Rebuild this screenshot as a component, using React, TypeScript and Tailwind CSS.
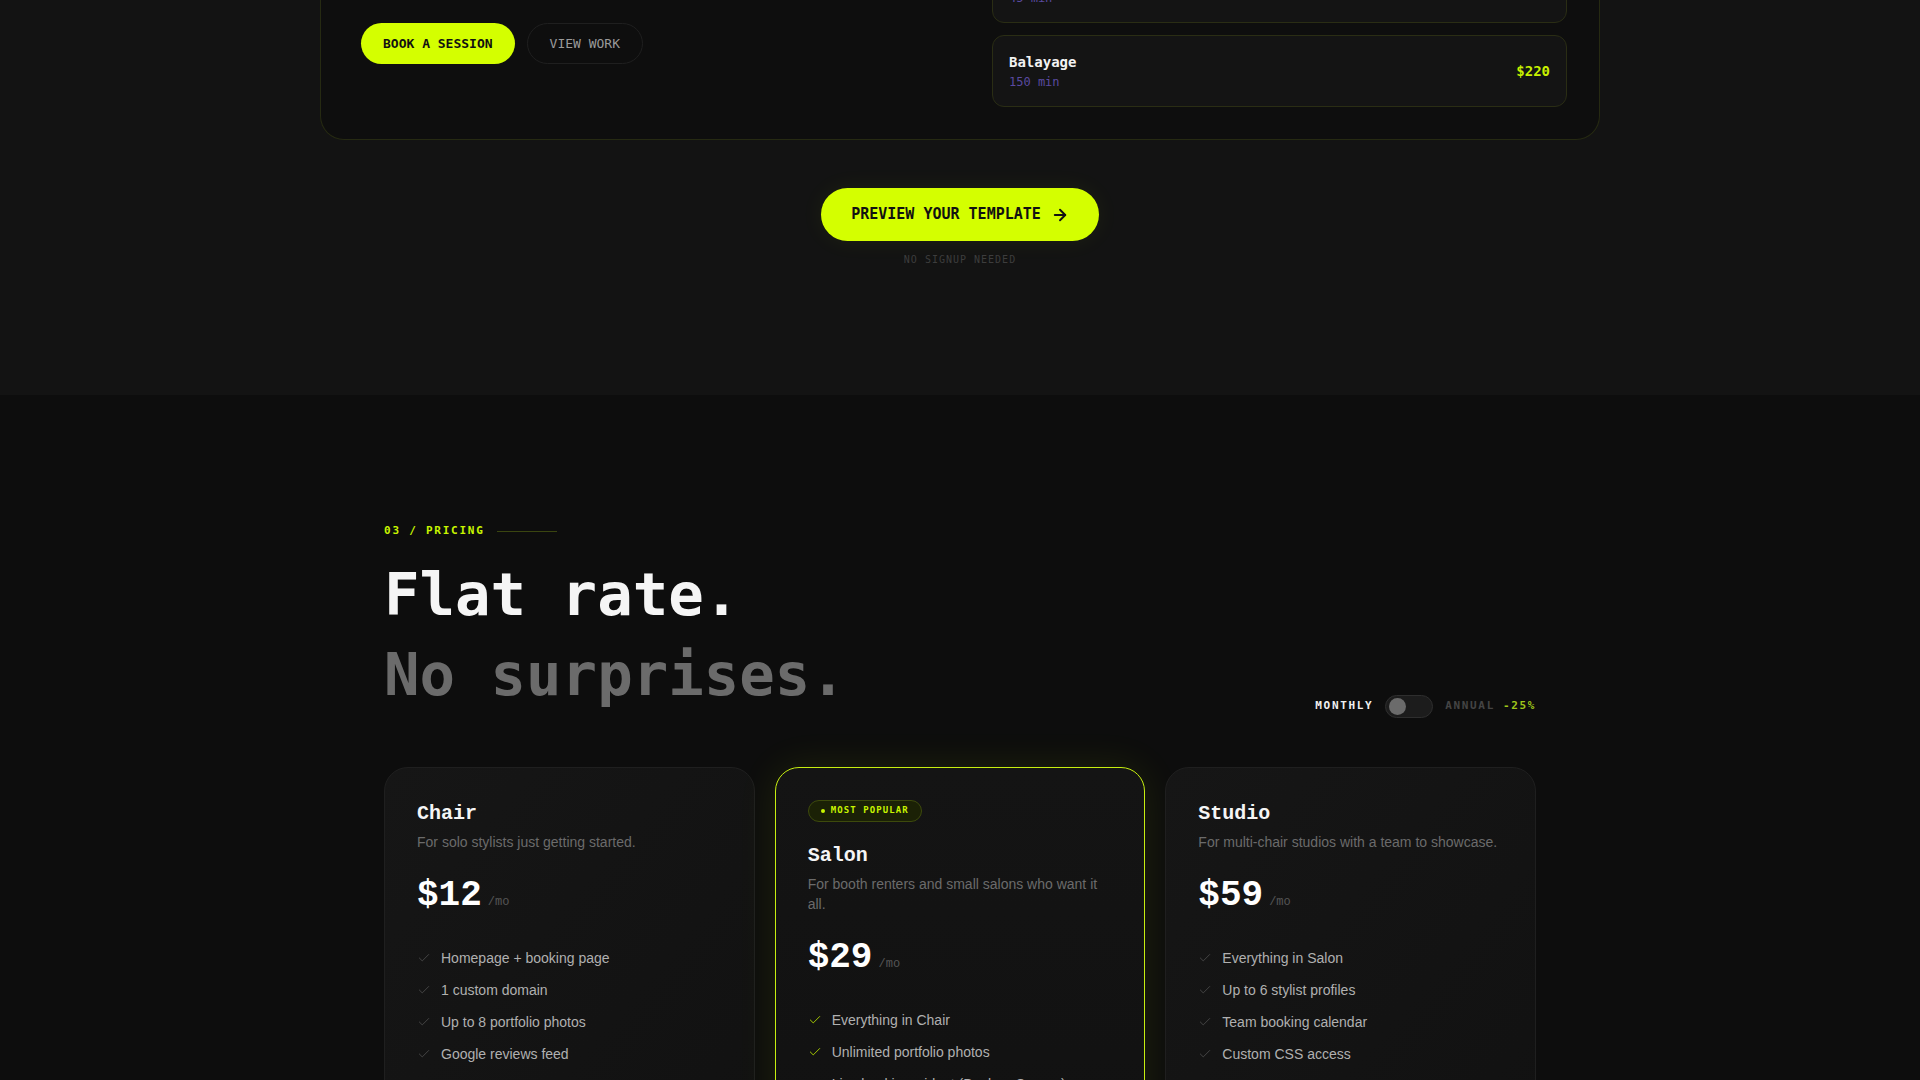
import { ArrowRight, Check } from "lucide-react";

const mono = "font-['DejaVu_Sans_Mono',monospace]";
const typeMono = "font-['Liberation_Mono',monospace]";
const sans = "font-['Liberation_Sans',Arial,sans-serif]";

type Service = { name: string; length: string; price: string };

const services: Service[] = [
  { name: "Blowout", length: "45 min", price: "$65" },
  { name: "Balayage", length: "150 min", price: "$220" },
];

type Plan = {
  name: string;
  blurb: string;
  price: number;
  features: string[];
  popular?: boolean;
};

const plans: Plan[] = [
  {
    name: "Chair",
    blurb: "For solo stylists just getting started.",
    price: 12,
    features: [
      "Homepage + booking page",
      "1 custom domain",
      "Up to 8 portfolio photos",
      "Google reviews feed",
      "Mobile-optimized layout",
    ],
  },
  {
    name: "Salon",
    blurb: "For booth renters and small salons who want it all.",
    price: 29,
    popular: true,
    features: [
      "Everything in Chair",
      "Unlimited portfolio photos",
      "Live booking widget (Booksy, Square)",
      "Instagram gallery sync",
      "Priority support",
    ],
  },
  {
    name: "Studio",
    blurb: "For multi-chair studios with a team to showcase.",
    price: 59,
    features: [
      "Everything in Salon",
      "Up to 6 stylist profiles",
      "Team booking calendar",
      "Custom CSS access",
      "Multi-location pages",
    ],
  },
];

function ServiceRow({ s }: { s: Service }) {
  return (
    <div className="flex items-center justify-between rounded-xl border border-[#2a2d14] bg-[#141414] px-4 py-4">
      <div className={mono}>
        <div className="text-[14px] font-bold leading-5 text-[#f2f2f2]">{s.name}</div>
        <div className="mt-0.5 text-[12px] leading-4 text-[#5a4aa0]">{s.length}</div>
      </div>
      <div className={`${mono} text-[14px] font-bold text-[#c8f000]`}>{s.price}</div>
    </div>
  );
}

function PlanCard({ plan }: { plan: Plan }) {
  return (
    <div
      className={
        plan.popular
          ? "rounded-3xl border border-[#c6ee10] bg-gradient-to-b from-[#141414] to-[#111111] px-8 pt-8 pb-10 shadow-[0_0_40px_rgba(212,255,0,0.09)]"
          : "rounded-3xl border border-[#1f1f1f] bg-gradient-to-br from-[#161616] to-[#111111] px-8 pt-8 pb-10"
      }
    >
      {plan.popular ? (
        <div
          className={`${mono} mb-5 flex h-[22px] w-fit items-center gap-1.5 rounded-full border border-[#3d4a0c] bg-[#1b2106] px-3 text-[9px] font-bold tracking-[0.12em] text-[#c8f500]`}
        >
          <span className="h-1 w-1 rounded-full bg-[#c8f500]" />
          MOST POPULAR
        </div>
      ) : null}
      <div className={`${typeMono} text-xl font-bold leading-7 text-[#f5f5f5]`}>{plan.name}</div>
      <p className={`${sans} mt-1 text-[14px] leading-5 text-[#6b6b6b]`}>{plan.blurb}</p>
      <div className="mt-6 flex items-baseline">
        <span className={`${typeMono} text-4xl font-bold leading-10 text-white`}>${plan.price}</span>
        <span className={`${typeMono} ml-1.5 text-[12px] text-[#555555]`}>/mo</span>
      </div>
      <ul className="mt-8 space-y-3">
        {plan.features.map((f) => (
          <li key={f} className={`${sans} flex items-center gap-2.5 text-[14px] leading-5 text-[#b0b0b0]`}>
            <Check
              size={14}
              strokeWidth={1.5}
              className={plan.popular ? "shrink-0 text-[#b8e000]" : "shrink-0 text-[#4a4a4a]"}
            />
            {f}
          </li>
        ))}
      </ul>
    </div>
  );
}

export default function App() {
  return (
    <div className="min-h-screen bg-[#0d0d0d]">
      <section className="bg-[#131313] pb-32">
        <div className="mx-auto max-w-[1280px]">
          {/* template preview card, top part scrolled off */}
          <div className="grid grid-cols-2 gap-14 rounded-b-3xl border-x border-b border-[#262a12] bg-[#0e0e0e] pr-8 pb-8 pl-10">
            <div className="flex items-start gap-3 pt-[23px]">
              <button
                type="button"
                className={`${mono} h-[41px] rounded-full bg-[#d4ff00] px-[22px] text-[13px] font-bold text-[#111]`}
              >
                BOOK A SESSION
              </button>
              <button
                type="button"
                className={`${mono} h-[41px] rounded-full border border-[#1f1f1f] px-[22px] text-[13px] text-[#9a9a9a]`}
              >
                VIEW WORK
              </button>
            </div>
            <div className="-mt-[49px] space-y-3">
              {services.map((s) => (
                <ServiceRow key={s.name} s={s} />
              ))}
            </div>
          </div>

          <div className="mt-12 flex flex-col items-center">
            <button
              type="button"
              className={`${mono} flex h-[53px] items-center gap-2.5 rounded-full bg-[#d4ff00] px-[30px] text-[15px] font-bold text-[#111] shadow-[0_0_24px_rgba(212,255,0,0.06)]`}
            >
              PREVIEW YOUR TEMPLATE
              <ArrowRight size={18} strokeWidth={2.5} />
            </button>
            <div className={`${mono} mt-3 text-[10px] leading-[14px] tracking-[0.1em] text-[#3d3d3d]`}>
              NO SIGNUP NEEDED
            </div>
          </div>
        </div>
      </section>

      <section className="pt-32 pb-24">
        <div className="mx-auto max-w-6xl">
          <div className="flex items-center">
            <span className={`${mono} text-[11px] font-bold leading-4 tracking-[0.16em] text-[#c8f500]`}>
              03 / PRICING
            </span>
            <span className="ml-3 h-px w-[60px] bg-[#3a4510]" />
          </div>

          <div className="mt-4 flex items-end justify-between">
            <h2 className={`${mono} text-[59px] font-bold leading-[80px]`}>
              <span className="block text-[#f5f5f5]">Flat rate.</span>
              <span className="block text-[#6b6b6b]">No surprises.</span>
            </h2>
            <div className={`${mono} -mb-[3px] flex items-center text-[11px] font-bold tracking-[0.15em]`}>
              <span className="text-[#f0f0f0]">MONTHLY</span>
              <span className="mx-3 flex h-[23px] w-12 items-center rounded-full border border-[#2e2e2e] bg-[#1c1c1c] px-[3px]">
                <span className="h-[17px] w-[17px] rounded-full bg-[#6b6b6b]" />
              </span>
              <span className="text-[#444444]">ANNUAL</span>
              <span className="ml-2 text-[#9fc51a]">-25%</span>
            </div>
          </div>

          <div className="mt-[52px] grid grid-cols-3 gap-5">
            {plans.map((p) => (
              <PlanCard key={p.name} plan={p} />
            ))}
          </div>
        </div>
      </section>
    </div>
  );
}
